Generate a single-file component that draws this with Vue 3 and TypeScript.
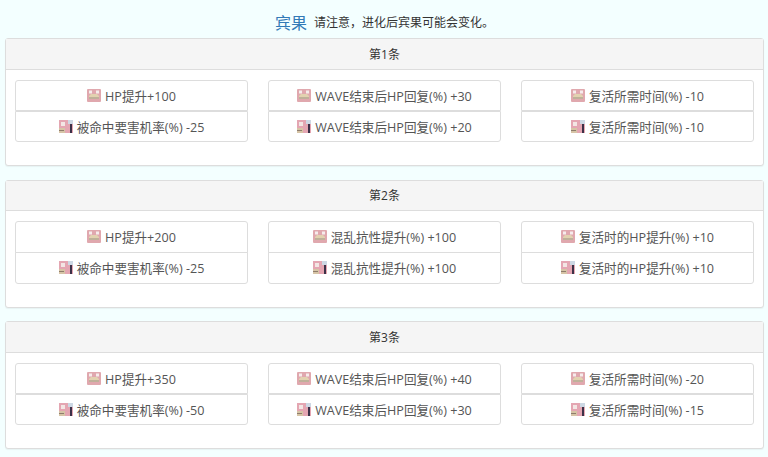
<script setup lang="ts">
const groups: { title: string; cols: [string, string][] }[] = [
  { title: '第1条', cols: [['HP提升+100', '被命中要害机率(%) -25'], ['WAVE结束后HP回复(%) +30', 'WAVE结束后HP回复(%) +20'], ['复活所需时间(%) -10', '复活所需时间(%) -10']] },
  { title: '第2条', cols: [['HP提升+200', '被命中要害机率(%) -25'], ['混乱抗性提升(%) +100', '混乱抗性提升(%) +100'], ['复活时的HP提升(%) +10', '复活时的HP提升(%) +10']] },
  { title: '第3条', cols: [['HP提升+350', '被命中要害机率(%) -50'], ['WAVE结束后HP回复(%) +40', 'WAVE结束后HP回复(%) +30'], ['复活所需时间(%) -20', '复活所需时间(%) -15']] },
]
</script>

<template>
  <div class="page">
    <div class="head">
      <span class="title">宾果</span>
      <span class="note">请注意，进化后宾果可能会变化。</span>
    </div>
    <section v-for="g in groups" :key="g.title" class="panel">
      <div class="panel-head">{{ g.title }}</div>
      <div class="panel-body">
        <div v-for="(col, i) in g.cols" :key="i" class="list">
          <div class="item">
            <svg class="icon" viewBox="0 0 14 13" width="14" height="13">
              <rect width="14" height="13" rx="1" fill="#e0a8ae" />
              <rect x="2" y="1.5" width="3" height="3" fill="#f6ecec" />
              <rect x="9" y="1.5" width="3" height="3" fill="#f6ecec" />
              <path d="M4 5h6l2 2v3H2V7z" fill="#e2d2b0" />
              <rect x="2" y="8.5" width="10" height="1" fill="#9c9084" />
            </svg>
            <span>{{ col[0] }}</span>
          </div>
          <div class="item second">
            <svg class="icon" viewBox="0 0 14 13" width="14" height="13">
              <rect width="14" height="13" fill="#e4a6b2" />
              <rect x="2" y="2" width="4" height="4" fill="#f3e6e4" />
              <rect x="0" y="8" width="6" height="5" fill="#d6c4a6" />
              <rect x="0" y="10" width="5" height="1" fill="#8f7d6c" />
              <rect x="9" y="0" width="5" height="4" fill="#cdd8e4" />
              <rect x="11" y="4" width="2" height="9" fill="#3c3148" />
            </svg>
            <span>{{ col[1] }}</span>
          </div>
        </div>
      </div>
    </section>
  </div>
</template>

<style scoped>
.page {
  width: 768px;
  height: 457px;
  box-sizing: border-box;
  padding: 0 4px 0 5px;
  overflow: hidden;
  background: #f3ffff;
  font-family: "Open Sans", "Noto Sans CJK SC", sans-serif;
  color: #333;
  font-size: 12px;
}
.head {
  height: 38px;
  display: flex;
  align-items: center;
  justify-content: center;
  gap: 7px;
  padding-top: 5px;
  box-sizing: border-box;
}
.title {
  font-size: 16px;
  color: #337ab7;
}
.note {
  font-size: 12px;
  color: #333;
}
.panel {
  height: 128px;
  margin-bottom: 13.5px;
  box-sizing: border-box;
  background: #fff;
  border: 1px solid #ddd;
  border-radius: 3px;
  box-shadow: 0 1px 1px rgba(0, 0, 0, 0.05);
}
.panel-head {
  height: 30.5px;
  box-sizing: border-box;
  display: flex;
  align-items: center;
  justify-content: center;
  background: #f5f5f5;
  border-bottom: 1px solid #ddd;
}
.panel-body {
  display: grid;
  grid-template-columns: repeat(3, 233px);
  column-gap: 20px;
  padding: 10px 9px;
}
.list {
  display: flex;
  flex-direction: column;
}
.item {
  height: 31.5px;
  box-sizing: border-box;
  border: 1px solid #ddd;
  border-radius: 3px 3px 0 0;
  display: flex;
  align-items: center;
  justify-content: center;
  gap: 4px;
  color: #555;
  font-size: 12.6px;
}
.second {
  margin-top: -0.5px;
  border-radius: 0 0 3px 3px;
}
.icon {
  flex: none;
  filter: blur(0.35px);
}
</style>
